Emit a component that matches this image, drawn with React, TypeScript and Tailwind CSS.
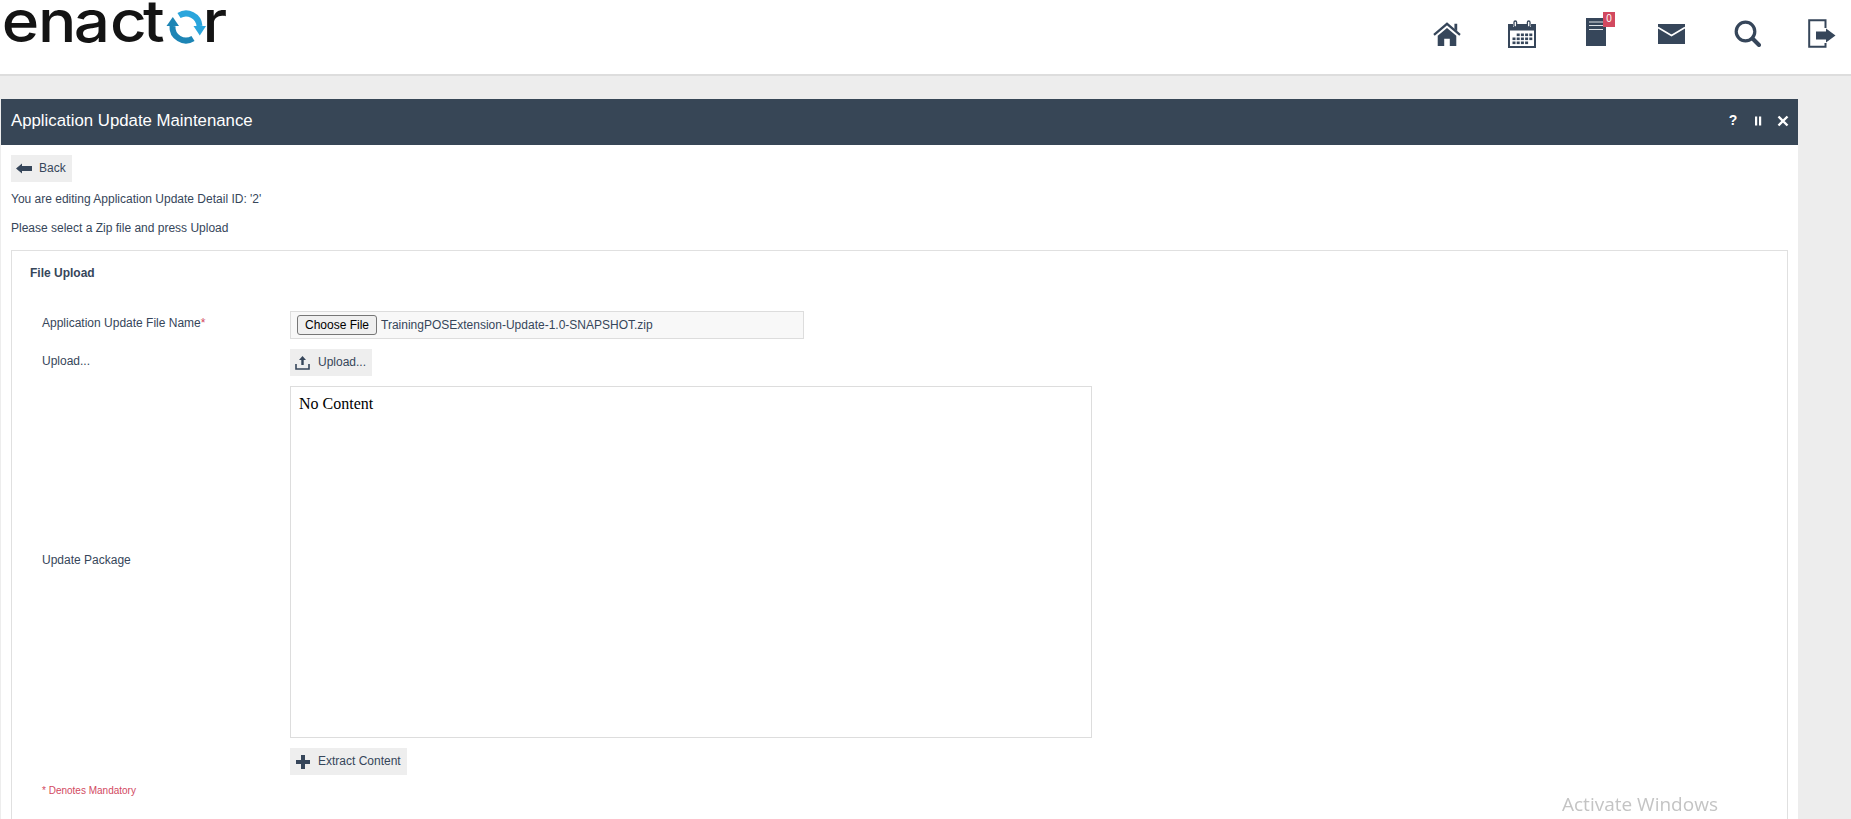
import React from "react";

function Home() {
  return (
    <svg width="28" height="26" viewBox="0 0 30 28" className="block">
      <path d="M1 15 L15 3 L29 15" fill="none" stroke="#36465a" strokeWidth="2.4" />
      <path d="M23 3h3v8l-3-2.5z" fill="#36465a" />
      <path d="M5 16 L15 7.5 L25 16 V27 H18 V19 H12 V27 H5 Z" fill="#36465a" />
    </svg>
  );
}

function Calendar() {
  const cells: React.ReactNode[] = [];
  for (let r = 0; r < 3; r++) {
    for (let c = 0; c < 5; c++) {
      if (r === 0 && c < 1) continue;
      if (r === 2 && c > 3) continue;
      cells.push(<rect key={`${r}-${c}`} x={4.5 + c * 4.2} y={13.5 + r * 4} width="3" height="2.6" fill="#36465a" />);
    }
  }
  return (
    <svg width="28" height="28" viewBox="0 0 28 28" className="block">
      <path d="M0 4h5v3h3.5V4h11v3H23V4h5v24H0z" fill="#36465a" />
      <rect x="2" y="10.5" width="24" height="15.5" fill="#fff" />
      <rect x="6" y="1" width="2.6" height="6" rx="1.3" fill="none" stroke="#36465a" strokeWidth="1.3" />
      <rect x="19.4" y="1" width="2.6" height="6" rx="1.3" fill="none" stroke="#36465a" strokeWidth="1.3" />
      {cells}
    </svg>
  );
}

function Doc() {
  return (
    <svg width="20" height="28" viewBox="0 0 20 28" className="block">
      <rect x="0" y="0" width="20" height="28" fill="#36465a" />
      <path d="M3 4h14M3 7.5h14M3 11.5h14" stroke="#dfe3e8" strokeWidth="1.2" />
    </svg>
  );
}

function Mail() {
  return (
    <svg width="27" height="20" viewBox="0 0 27 20" className="block">
      <path d="M0 0h27v20H0z" fill="#36465a" />
      <path d="M0 3.5 L13.5 11.5 L27 3.5" fill="none" stroke="#fff" strokeWidth="1.6" />
    </svg>
  );
}

function Search() {
  return (
    <svg width="27" height="27" viewBox="0 0 27 27" className="block">
      <circle cx="11.5" cy="11.5" r="9.3" fill="none" stroke="#36465a" strokeWidth="3.2" />
      <path d="M18.5 18.5 L25 25" stroke="#36465a" strokeWidth="4" strokeLinecap="round" />
    </svg>
  );
}

function Logout() {
  return (
    <svg width="28" height="29" viewBox="0 0 28 29" className="block">
      <path d="M17.5 9V1.2H1.2V27.8H17.5V24" fill="none" stroke="#36465a" strokeWidth="2" />
      <path d="M8 12.5h10V9.5L27.5 16.5 18 23.5v-3H8z" fill="#36465a" />
    </svg>
  );
}

function Logo() {
  return (
    <svg width="240" height="60" viewBox="0 0 240 60" className="block">
      <text
        transform="scale(1.1 1)"
        x="1.5 34.5 67 100 130"
        y="42"
        fontFamily="Inter, sans-serif"
        fontSize="58"
        fontWeight="500"
        fill="#141414"
      >
        enact
      </text>
      <text
        transform="scale(1.1 1)"
        x="184"
        y="42"
        fontFamily="Inter, sans-serif"
        fontSize="58"
        fontWeight="500"
        fill="#141414"
      >
        r
      </text>
      <g transform="translate(1 1)">
        <path d="M178 14.5 A13.5 13.5 0 0 1 198.5 25" fill="none" stroke="#2aa5dc" strokeWidth="6" />
        <path d="M192.5 25 H205 L198.8 34.5 Z" fill="#2aa5dc" />
        <path d="M171.5 25 A13.5 13.5 0 0 0 192 37.5" fill="none" stroke="#1d85b5" strokeWidth="6" />
        <path d="M165.5 25 H178 L171.8 16 Z" fill="#1d85b5" />
      </g>
    </svg>
  );
}

function ToolBtn({ icon, label, className }: { icon: React.ReactNode; label: string; className: string }) {
  return (
    <div className={`flex h-[27px] items-center bg-[#eeeeee] pl-[2px] text-[12px] text-[#36465a] ${className}`}>
      <span className="flex w-[21px] shrink-0 justify-center">{icon}</span>
      <span className="ml-[5px] pb-[1px]">{label}</span>
    </div>
  );
}

export default function App() {
  return (
    <div className="h-[819px] w-[1851px] overflow-hidden bg-[#ededed] font-['Liberation_Sans',Arial,sans-serif]">
      <header className="flex h-[76px] items-start justify-between border-b-2 border-[#dddddd] bg-white">
        <Logo />
        <div className="mr-[15px] mt-[19px] flex items-center">
          <Home />
          <div className="ml-[47px]"><Calendar /></div>
          <div className="relative ml-[50px] -mt-[3px]">
            <Doc />
            <span className="absolute left-[17px] top-[-6px] flex h-[15px] w-[12px] items-start justify-center bg-[#d2495f] text-[10px] leading-[13px] text-white">0</span>
          </div>
          <div className="ml-[52px]"><Mail /></div>
          <div className="ml-[49px]"><Search /></div>
          <div className="ml-[47px]"><Logout /></div>
        </div>
      </header>

      <main className="ml-px mt-[23px] h-[720px] w-[1797px] bg-white">
        <div className="flex h-[46px] items-center justify-between bg-[#374656] pb-[3px] pl-[10px] pr-[9px] text-white">
          <h1 className="text-[16.8px] font-normal">Application Update Maintenance</h1>
          <div className="flex items-center gap-[13px] text-[14px] font-bold">
            <span className="w-[12px] text-center">?</span>
            <svg width="12" height="12" viewBox="0 0 12 12"><path d="M3 1.5h2.2v9H3zM7 1.5h2.2v9H7z" fill="#fff" /></svg>
            <svg width="12" height="12" viewBox="0 0 12 12"><path d="M1.5 1.5 L10.5 10.5 M10.5 1.5 L1.5 10.5" stroke="#fff" strokeWidth="2.4" /></svg>
          </div>
        </div>

        <div className="px-[10px] pt-[10px] text-[12px] text-[#36465a]">
          <ToolBtn
            className="w-[61px]"
            label="Back"
            icon={
              <svg width="16" height="11" viewBox="0 0 16 11"><path d="M0 5.5 L6 0.5 V3 H16 V8 H6 V10.5 Z" fill="#36465a" /></svg>
            }
          />
          <p className="mt-[10px] leading-[14px]">You are editing Application Update Detail ID: '2'</p>
          <p className="mt-[15px] leading-[14px]">Please select a Zip file and press Upload</p>

          <section className="mt-[15px] h-[600px] border border-b-0 border-[#e0e0e0]">
            <h2 className="ml-[18px] mt-[15px] text-[12px] font-bold leading-[14px]">File Upload</h2>

            <div className="ml-[30px] mt-[31px]">
              <div className="flex h-[28px] items-start">
                <label className="mt-[5px] w-[248px] leading-[14px]">
                  Application Update File Name<span className="text-[#d2495f]">*</span>
                </label>
                <div className="flex h-[28px] w-[514px] items-center border border-[#dddddd] bg-[#f8f8f8] pl-[6px]">
                  <span className="flex h-[20px] w-[80px] items-center justify-center rounded-[3px] border border-[#767676] bg-[#efefef] text-[12px] text-black">Choose File</span>
                  <span className="ml-[4px] text-[#36465a]">TrainingPOSExtension-Update-1.0-SNAPSHOT.zip</span>
                </div>
              </div>

              <div className="mt-[10px] flex h-[27px] items-start">
                <label className="mt-[5px] w-[248px] leading-[14px]">Upload...</label>
                <ToolBtn
                  className="w-[82px]"
                  label="Upload..."
                  icon={
                    <svg width="15" height="14" viewBox="0 0 15 14">
                      <path d="M7.5 0 L11 4 H8.7 V9 H6.3 V4 H4 Z" fill="#36465a" />
                      <path d="M1 8 V13 H14 V8" fill="none" stroke="#36465a" strokeWidth="1.6" />
                    </svg>
                  }
                />
              </div>

              <div className="mt-[10px] flex items-center">
                <label className="w-[248px] pb-[5px] leading-[14px]">Update Package</label>
                <div className="h-[352px] w-[802px] border border-[#dddddd] bg-white pl-[8px] pt-[8px] font-['Liberation_Serif',serif] text-[16px] leading-[18px] text-black">
                  No Content
                </div>
              </div>

              <div className="ml-[248px] mt-[10px]">
                <ToolBtn
                  className="w-[117px]"
                  label="Extract Content"
                  icon={
                    <svg width="14" height="14" viewBox="0 0 14 14"><path d="M5 0h4v5h5v4H9v5H5V9H0V5h5z" fill="#36465a" /></svg>
                  }
                />
              </div>

              <p className="mt-[10px] text-[10px] leading-[12px] text-[#d2495f]">* Denotes Mandatory</p>
            </div>
          </section>
        </div>
      </main>

      <div className="pointer-events-none fixed left-[1562px] top-[792px] font-['Open_Sans',sans-serif] text-[19px] leading-[24px] text-[#c4c4c4]">
        Activate Windows
      </div>
    </div>
  );
}
